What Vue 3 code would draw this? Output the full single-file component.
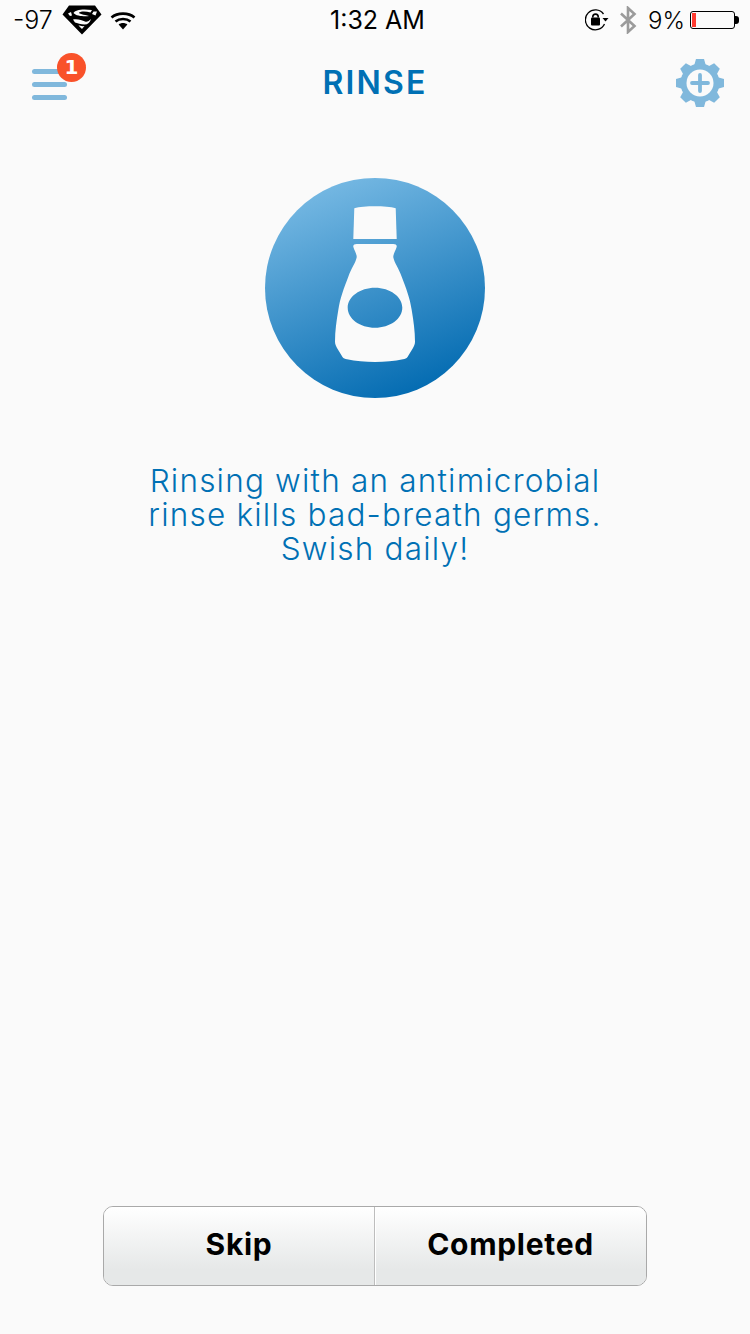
<script setup>
const message = ['Rinsing with an antimicrobial', 'rinse kills bad-breath germs.', 'Swish daily!']
const gearTeeth = [0, 45, 90, 135, 180, 225, 270, 315]
</script>

<template>
  <div class="screen">
    <div class="status-bar">
      <div class="status-left">
        <span class="signal">-97</span>
        <svg class="shield" width="40" height="30" viewBox="0 0 40 30">
          <path fill="#000" fill-rule="evenodd" d="M7 .5H33L39.500 9.500L20 29.500L.5 9.500ZM11.500 8C13 5 20 3.500 30 5L28.500 7.500C24 6 19 6 17 7.500C16.500 9 22 9.500 27 11C24 11.500 14 11.500 11.500 8ZM31.500 6.500L35 6.500L33.500 10.500L30 9ZM6 8.500L9 7L10 10.500L8 11ZM11 14.500C15 13.500 20 15 23 16.500C25 17.300 27 16 29 14C28 17.500 26 19.500 22.500 19.500C19 19.500 15 18 13 17.500ZM16.500 20.500C18 20.500 20 21.500 22.500 21L20 24Z"/>
        </svg>
        <svg class="wifi" width="26" height="19" viewBox="0 0 26 19">
          <path fill="none" stroke="#000" stroke-width="2.600" d="M1.500 6.500C7.500 1.300 18.500 1.300 24.500 6.500"/>
          <path fill="none" stroke="#000" stroke-width="2.600" d="M5.500 10.500C9.500 7.200 16.500 7.200 20.500 10.500"/>
          <path fill="#000" d="M8.600 13.500C11 11.500 15 11.500 17.400 13.500L13 18.500Z"/>
        </svg>
      </div>
      <span class="clock">1:32 AM</span>
      <div class="status-right">
        <svg class="lock" width="24" height="24" viewBox="0 0 24 24">
          <path fill="none" stroke="#000" stroke-width="1.300" d="M18.500 6A10 10 0 1 0 19.500 16"/>
          <path fill="#000" d="M17.500 10H23.500L20.500 13.500Z"/>
          <rect x="6" y="9.500" width="9" height="8" rx="1" fill="#000"/>
          <path fill="none" stroke="#000" stroke-width="1.600" d="M7.800 9.500V8.800A2.700 2.700 0 0 1 13.200 8.800V9.500"/>
        </svg>
        <svg class="bluetooth" width="18" height="28" viewBox="0 0 18 28">
          <path fill="none" stroke="#9b9b9b" stroke-width="2.600" d="M2 7.500L15.500 20L9 26V2L15.500 8L2 20.500"/>
        </svg>
        <span class="percent">9%</span>
        <div class="battery">
          <div class="battery-body"><div class="battery-level"></div></div>
          <div class="battery-tip"></div>
        </div>
      </div>
    </div>

    <header class="nav">
      <button class="menu">
        <span class="menu-line"></span>
        <span class="menu-line"></span>
        <span class="menu-line"></span>
        <span class="badge">1</span>
      </button>
      <h1 class="title">RINSE</h1>
      <svg class="settings" width="50" height="50" viewBox="0 0 50 50">
        <g fill="#80b8dc">
          <circle cx="25" cy="25" r="19.500"/>
          <path v-for="a in gearTeeth" :key="a" d="M19 8L21 1H29L31 8Z" :transform="`rotate(${a} 25 25)`"/>
        </g>
        <circle cx="25" cy="25" r="13.500" fill="#fafafa"/>
        <path fill="none" stroke="#80b8dc" stroke-width="3.800" stroke-linecap="round" d="M25 17V33M17 25H33"/>
      </svg>
    </header>

    <main class="content">
      <div class="tip-icon">
        <svg width="82" height="164" viewBox="0 0 82 164">
          <path fill="#fafafa" d="M20.300 2.300C30 -.3 52 -.3 61.700 2.300L62.700 33H19.300Z"/>
          <path fill="#fafafa" fill-rule="evenodd" d="M22.700 38H59.300C61.500 38 63 39 62.700 40.700C62 44 59 48 59.300 51.300C60 56 65 63 67.700 70.700C72 82 76 92 77.700 104C79.500 115 81 125 81 135.700C81 138 80 140 79 142L73.500 151C72.500 152.500 71 152.800 69 153.200C52 156.800 30 156.800 13 153.200C11 152.800 9.500 152.500 8.500 151L3 142C2 140 1 138 1 135.700C1 125 2.500 115 4.300 104C6 92 10 82 14.300 70.700C17 63 22 56 22.700 51.300C23 48 20 44 19.300 40.700C19 39 20.500 38 22.700 38ZM41 81.700C26 81.700 13.700 90.700 13.700 101.700C13.700 112.700 26 121.700 41 121.700C56 121.700 68.300 112.700 68.300 101.700C68.300 90.700 56 81.700 41 81.700Z"/>
        </svg>
      </div>
      <p class="message">
        <span v-for="line in message" :key="line" class="message-line">{{ line }}</span>
      </p>
    </main>

    <footer class="actions">
      <button class="action">Skip</button>
      <button class="action">Completed</button>
    </footer>
  </div>
</template>

<style>
html, body {
  margin: 0;
  background: #fafafa;
}
</style>

<style scoped>
.screen {
  width: 750px;
  height: 1334px;
  display: flex;
  flex-direction: column;
  background: #fafafa;
  font-family: "Inter", "Liberation Sans", sans-serif;
  overflow: hidden;
}
.status-bar {
  height: 40px;
  flex: none;
  display: grid;
  grid-template-columns: 1fr auto 1fr;
  align-items: center;
  background: #fbfbfb;
  color: #000;
}
.status-left {
  display: flex;
  align-items: center;
  padding-left: 13px;
}
.signal {
  font-size: 25px;
  font-weight: 300;
  width: 49px;
}
.shield {
  display: block;
  margin-top: -1px;
}
.wifi {
  display: block;
  margin-left: 8px;
}
.clock {
  font-size: 25px;
  font-weight: 400;
  padding-left: 5px;
}
.status-right {
  display: flex;
  align-items: center;
  justify-content: flex-end;
  padding-right: 11px;
}
.lock {
  display: block;
  margin-right: 10px;
}
.bluetooth {
  display: block;
  margin-right: 11px;
}
.percent {
  font-size: 24px;
  font-weight: 300;
  margin-right: 5px;
}
.battery {
  display: flex;
  align-items: center;
}
.battery-body {
  width: 41px;
  height: 14px;
  border: 1px solid #000;
  border-radius: 3px;
  padding: 1px;
}
.battery-level {
  width: 4px;
  height: 14px;
  background: #ff3b30;
}
.battery-tip {
  width: 4px;
  height: 8px;
  background: #000;
  border-radius: 0 3px 3px 0;
}
.nav {
  height: 84px;
  flex: none;
  display: flex;
  align-items: center;
  justify-content: space-between;
  padding: 0 25px 0 32px;
  position: relative;
}
.menu {
  position: relative;
  width: 36px;
  padding: 0;
  border: 0;
  background: none;
  display: flex;
  flex-direction: column;
  gap: 8px;
  margin-top: 4px;
}
.menu-line {
  display: block;
  width: 35px;
  height: 5px;
  border-radius: 3px;
  background: #80b8dc;
}
.badge {
  position: absolute;
  top: -16px;
  left: 25px;
  width: 29px;
  height: 29px;
  border-radius: 50%;
  background: #f9522a;
  color: #fff;
  font-family: "DejaVu Sans", sans-serif;
  font-size: 20px;
  font-weight: 700;
  line-height: 29px;
  text-align: center;
}
.title {
  position: absolute;
  left: 0;
  right: 0;
  margin: 0;
  text-align: center;
  font-size: 32px;
  font-weight: 600;
  color: #0070b4;
  letter-spacing: 2.200px;
}
.settings {
  display: block;
  margin-top: 2px;
}
.content {
  flex: 1;
  display: flex;
  flex-direction: column;
  align-items: center;
  padding-top: 54px;
}
.tip-icon {
  width: 220px;
  height: 220px;
  border-radius: 50%;
  background: linear-gradient(158deg, #78bae4 8%, #0069b0 92%);
  display: flex;
  align-items: center;
  justify-content: center;
}
.message {
  margin: 66px 0 0;
  text-align: center;
  color: #0070b4;
  font-size: 31.500px;
  font-weight: 350;
  line-height: 34px;
  letter-spacing: 1.200px;
}
.message-line {
  display: block;
}
.actions {
  flex: none;
  display: flex;
  width: 544px;
  height: 80px;
  box-sizing: border-box;
  margin: 0 auto 48px;
  border: 1px solid #a9a9a9;
  border-radius: 10px;
  overflow: hidden;
}
.action {
  flex: 1;
  border: 0;
  padding: 0 0 4px;
  background: linear-gradient(#ffffff, #e6e8e8 80%);
  color: #000;
  font-family: inherit;
  font-size: 30px;
  font-weight: 700;
  letter-spacing: 0.700px;
}
.action:first-child {
  flex: none;
  width: 270px;
}
.action + .action {
  border-left: 1px solid #bdbdbd;
  box-shadow: inset 1px 0 0 #fff;
}
</style>
